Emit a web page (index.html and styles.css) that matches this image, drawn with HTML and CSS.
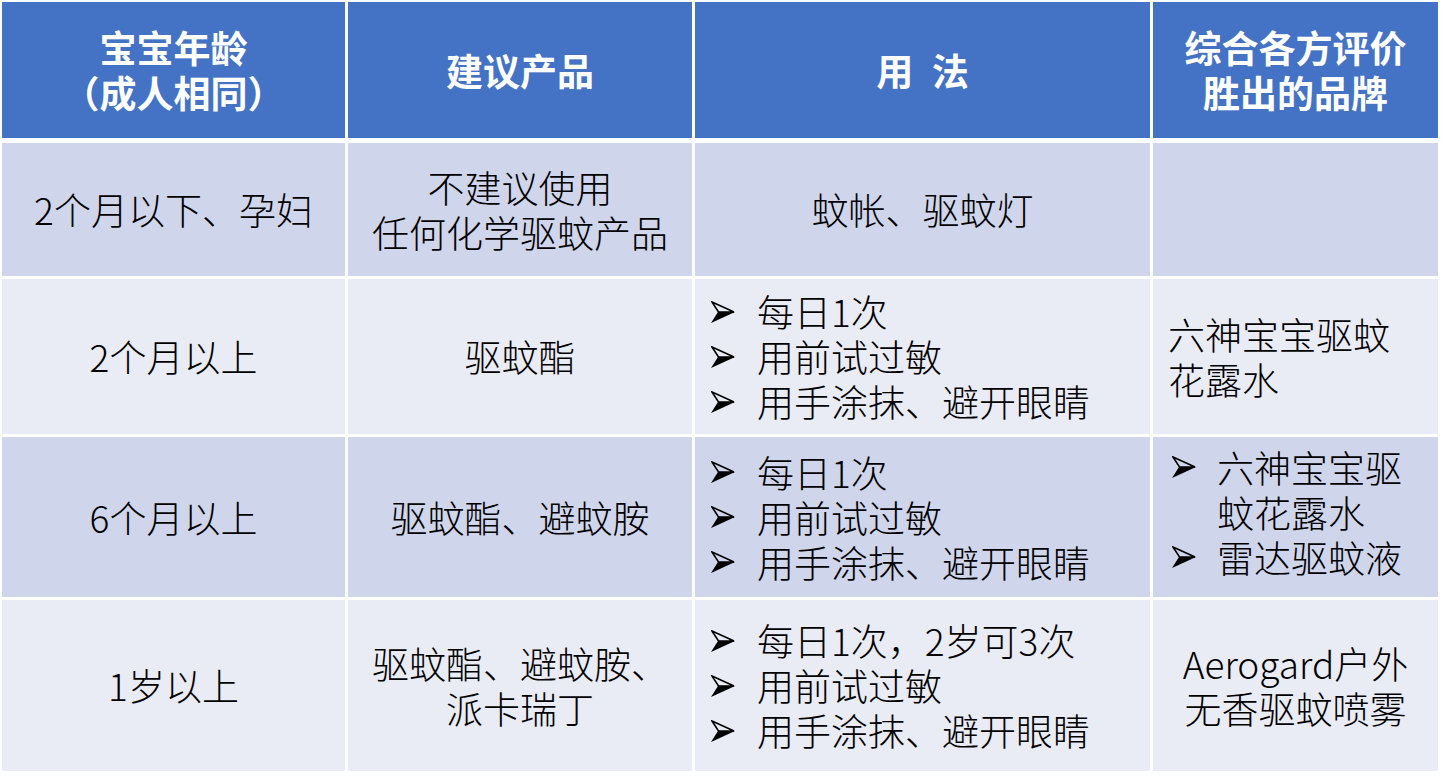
FILE: index.html
```html
<!DOCTYPE html>
<html lang="zh-CN">
<head>
<meta charset="utf-8">
<title>驱蚊产品建议</title>
<link rel="stylesheet" href="styles.css">
</head>
<body>
<div class="table">
  <div class="cell head">宝宝年龄<br>（成人相同）</div>
  <div class="cell head">建议产品</div>
  <div class="cell head">用&ensp;法</div>
  <div class="cell head">综合各方评价<br>胜出的品牌</div>

  <div class="cell dark">2个月以下、孕妇</div>
  <div class="cell dark">不建议使用<br>任何化学驱蚊产品</div>
  <div class="cell dark">蚊帐、驱蚊灯</div>
  <div class="cell dark"></div>

  <div class="cell light">2个月以上</div>
  <div class="cell light">驱蚊酯</div>
  <div class="cell light list">
    <ul>
      <li><span class="bullet"><svg viewBox="0 0 24 22" width="24" height="22"><path d="M1,1 L23,11 L7.5,11 Z" fill="none" stroke="#000" stroke-width="1.6" stroke-linejoin="miter"/><path d="M7,11 L24,11 L0,22 Z" fill="#000"/></svg></span><span>每日1次</span></li>
      <li><span class="bullet"><svg viewBox="0 0 24 22" width="24" height="22"><path d="M1,1 L23,11 L7.5,11 Z" fill="none" stroke="#000" stroke-width="1.6"/><path d="M7,11 L24,11 L0,22 Z" fill="#000"/></svg></span><span>用前试过敏</span></li>
      <li><span class="bullet"><svg viewBox="0 0 24 22" width="24" height="22"><path d="M1,1 L23,11 L7.5,11 Z" fill="none" stroke="#000" stroke-width="1.6"/><path d="M7,11 L24,11 L0,22 Z" fill="#000"/></svg></span><span>用手涂抹、避开眼睛</span></li>
    </ul>
  </div>
  <div class="cell light left">六神宝宝驱蚊<br>花露水</div>

  <div class="cell dark">6个月以上</div>
  <div class="cell dark">驱蚊酯、避蚊胺</div>
  <div class="cell dark list">
    <ul>
      <li><span class="bullet"><svg viewBox="0 0 24 22" width="24" height="22"><path d="M1,1 L23,11 L7.5,11 Z" fill="none" stroke="#000" stroke-width="1.6"/><path d="M7,11 L24,11 L0,22 Z" fill="#000"/></svg></span><span>每日1次</span></li>
      <li><span class="bullet"><svg viewBox="0 0 24 22" width="24" height="22"><path d="M1,1 L23,11 L7.5,11 Z" fill="none" stroke="#000" stroke-width="1.6"/><path d="M7,11 L24,11 L0,22 Z" fill="#000"/></svg></span><span>用前试过敏</span></li>
      <li><span class="bullet"><svg viewBox="0 0 24 22" width="24" height="22"><path d="M1,1 L23,11 L7.5,11 Z" fill="none" stroke="#000" stroke-width="1.6"/><path d="M7,11 L24,11 L0,22 Z" fill="#000"/></svg></span><span>用手涂抹、避开眼睛</span></li>
    </ul>
  </div>
  <div class="cell dark list brands">
    <ul>
      <li><span class="bullet"><svg viewBox="0 0 24 22" width="24" height="22"><path d="M1,1 L23,11 L7.5,11 Z" fill="none" stroke="#000" stroke-width="1.6"/><path d="M7,11 L24,11 L0,22 Z" fill="#000"/></svg></span><span>六神宝宝驱<br>蚊花露水</span></li>
      <li><span class="bullet"><svg viewBox="0 0 24 22" width="24" height="22"><path d="M1,1 L23,11 L7.5,11 Z" fill="none" stroke="#000" stroke-width="1.6"/><path d="M7,11 L24,11 L0,22 Z" fill="#000"/></svg></span><span>雷达驱蚊液</span></li>
    </ul>
  </div>

  <div class="cell light">1岁以上</div>
  <div class="cell light">驱蚊酯、避蚊胺、<br>派卡瑞丁</div>
  <div class="cell light list">
    <ul>
      <li><span class="bullet"><svg viewBox="0 0 24 22" width="24" height="22"><path d="M1,1 L23,11 L7.5,11 Z" fill="none" stroke="#000" stroke-width="1.6"/><path d="M7,11 L24,11 L0,22 Z" fill="#000"/></svg></span><span>每日1次，2岁可3次</span></li>
      <li><span class="bullet"><svg viewBox="0 0 24 22" width="24" height="22"><path d="M1,1 L23,11 L7.5,11 Z" fill="none" stroke="#000" stroke-width="1.6"/><path d="M7,11 L24,11 L0,22 Z" fill="#000"/></svg></span><span>用前试过敏</span></li>
      <li><span class="bullet"><svg viewBox="0 0 24 22" width="24" height="22"><path d="M1,1 L23,11 L7.5,11 Z" fill="none" stroke="#000" stroke-width="1.6"/><path d="M7,11 L24,11 L0,22 Z" fill="#000"/></svg></span><span>用手涂抹、避开眼睛</span></li>
    </ul>
  </div>
  <div class="cell light">Aerogard户外<br>无香驱蚊喷雾</div>
</div>
</body>
</html>
```

FILE: styles.css
```css
html, body {
  margin: 0;
  padding: 0;
  background: #ffffff;
}

body {
  font-family: "Noto Sans CJK SC", "Noto Sans", sans-serif;
  color: #000;
}

.table {
  display: grid;
  grid-template-columns: 343px 344px 455px 285px;
  grid-template-rows: 138px 133px 155px 160px 171px;
  column-gap: 3px;
  row-gap: 3px;
  padding: 2px 0 0 2px;
}

.cell {
  display: flex;
  align-items: center;
  justify-content: center;
  text-align: center;
  font-size: 37px;
  line-height: 45px;
  font-weight: 300;
}

.head {
  background: #4472c4;
  color: #ffffff;
  font-weight: 700;
  margin-bottom: 2px;
}

.dark {
  background: #cfd5ea;
}

.light {
  background: #e9ebf5;
}

.left {
  justify-content: flex-start;
  text-align: left;
  padding-left: 15px;
}

.list {
  justify-content: flex-start;
  text-align: left;
  padding-left: 16px;
}

.list ul {
  list-style: none;
  margin: 0;
  padding: 0;
}

.list li {
  display: flex;
  align-items: flex-start;
}

.bullet {
  flex: 0 0 46px;
  height: 45px;
  display: flex;
  align-items: center;
}

.bullet svg {
  display: block;
}

.brands {
  padding-left: 19px;
  padding-bottom: 10px;
  box-sizing: border-box;
}

.brands .bullet {
  flex-basis: 45px;
}
```
